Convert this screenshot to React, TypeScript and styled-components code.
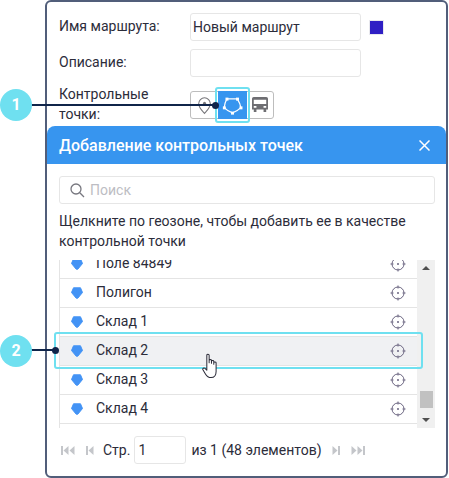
import styled, { createGlobalStyle } from "styled-components";

const GlobalStyle = createGlobalStyle`
  html, body {
    margin: 0;
    padding: 0;
    background: #fff;
  }
  body {
    font-family: Roboto, "Liberation Sans", sans-serif;
    font-size: 14px;
    color: #2c2c3a;
  }
`;

const rows = ["Поле 84849", "Полигон", "Склад 1", "Склад 2", "Склад 3", "Склад 4"];

const GeoIcon = () => (
  <svg width="12" height="12" viewBox="0 0 12 12">
    <path d="M2.500 .8H9.500L11.500 5.500L6.800 11.200H5.200L.5 5.500Z" fill="#4393f5" stroke="#4393f5" strokeLinejoin="round" />
  </svg>
);

const TargetIcon = () => (
  <svg width="16" height="16" viewBox="0 0 16 16" fill="none" stroke="#6a6480">
    <circle cx="8" cy="8" r="6" />
    <path d="M8 .5v3M8 12.500v3M.5 8h3M12.500 8h3" />
    <circle cx="8" cy="8" r="1" fill="#6a6480" stroke="none" />
  </svg>
);

const PinIcon = () => (
  <svg width="15" height="19" viewBox="0 0 16 20" fill="none" stroke="#77767a" strokeWidth="1.1">
    <path d="M8 18.500C5 15 1.800 12 1.800 8a6.200 6.200 0 0 1 12.400 0c0 4-3.200 7-6.200 10.500Z" />
    <circle cx="8" cy="7.500" r="1.600" fill="#77767a" stroke="none" />
  </svg>
);

const PolygonIcon = () => (
  <svg width="21" height="21" viewBox="0 0 24 24" fill="none" stroke="#fff" strokeWidth="1.4">
    <path d="M5.500 4.500H17.500Q21 10 21.500 14.500Q17 19 12 20.500Q7 19 2.500 14.500Q3 9 5.500 4.500Z" />
    <g fill="#fff" stroke="none">
      <rect x="4" y="3" width="3.400" height="3.400" />
      <rect x="16" y="3" width="3.400" height="3.400" />
      <rect x="20" y="13" width="3.400" height="3.400" />
      <rect x="10.300" y="19" width="3.400" height="3.400" />
      <rect x="1" y="13" width="3.400" height="3.400" />
    </g>
  </svg>
);

const BusIcon = () => (
  <svg width="18" height="16" viewBox="0 0 20 18">
    <path
      fillRule="evenodd"
      fill="#6e6e72"
      d="M3 0H17A2 2 0 0 1 19 2V14H17V17H14V14H6V17H3V14H1V2A2 2 0 0 1 3 0ZM3 3V8H17V3ZM3 10V12H6V10ZM14 10V12H17V10Z"
    />
  </svg>
);

const SearchIcon = () => (
  <svg width="15" height="15" viewBox="0 0 15 15" fill="none" stroke="#77777f" strokeWidth="1.3">
    <circle cx="6" cy="6" r="5" />
    <path d="M9.800 9.800L14 14" />
  </svg>
);

const CloseIcon = () => (
  <svg width="11" height="11" viewBox="0 0 11 11" stroke="#fff" strokeWidth="1.5">
    <path d="M.5.5l10 10M10.500.5l-10 10" />
  </svg>
);

const PagerIcon = ({ double, flip }: { double?: boolean; flip?: boolean }) => (
  <PagerGlyph $flip={flip} width={double ? 14 : 8} height="9" viewBox={double ? "0 0 14 9" : "0 0 8 9"} fill="#c4c6ca">
    <rect x="0" y="0" width="2" height="9" />
    <path d="M7.500 0V9L2.500 4.500Z" />
    {double && <path d="M13.500 0V9L8.500 4.500Z" />}
  </PagerGlyph>
);

const HandCursor = () => (
  <svg width="18" height="26" viewBox="0 0 19 28" fill="#fff" stroke="#2b2b38" strokeWidth="1.1" strokeLinejoin="round">
    <path d="M5 14V2.500C5 .8 7.500 .8 7.500 2.500V10.500V8C7.500 6.800 10 6.800 10 8V11V9C10 7.800 12.500 7.800 12.500 9V12V10.500C12.500 9.300 15 9.300 15 10.500V20C15 24 13 26.500 9.500 26.500C6.500 26.500 5 25 3.500 22.500L.8 18C.2 16.800 1.800 15.500 3 16.500L5 18.500Z" />
  </svg>
);

export default function App() {
  return (
    <>
      <GlobalStyle />
      <Page>
        <Card>
          <Form>
            <Label>Имя маршрута:</Label>
            <NameCell>
              <TextField>Новый маршрут</TextField>
              <Swatch />
            </NameCell>
            <Label>Описание:</Label>
            <TextField />
            <Label $multiline>Контрольные точки:</Label>
            <ButtonGroup>
              <ToolButton>
                <PinIcon />
              </ToolButton>
              <ToolButton $active>
                <PolygonIcon />
              </ToolButton>
              <ToolButton>
                <BusIcon />
              </ToolButton>
            </ButtonGroup>
          </Form>
          <Dialog>
            <DialogHeader>
              <DialogTitle>Добавление контрольных точек</DialogTitle>
              <CloseIcon />
            </DialogHeader>
            <DialogBody>
              <SearchField>
                <SearchIcon />
                <span>Поиск</span>
              </SearchField>
              <Hint>Щелкните по геозоне, чтобы добавить ее в качестве контрольной точки</Hint>
              <ListBox>
                <ListViewport>
                  <ListInner>
                    {rows.map((name) => (
                      <Row key={name} $hover={name === "Склад 2"}>
                        <GeoIcon />
                        <RowName>{name}</RowName>
                        <TargetIcon />
                      </Row>
                    ))}
                  </ListInner>
                </ListViewport>
                <ScrollBar>
                  <ArrowUp />
                  <ScrollThumb />
                  <ArrowDown />
                </ScrollBar>
              </ListBox>
              <Pager>
                <PagerIcon double />
                <PagerGap />
                <PagerIcon />
                <PageLabel>Стр.</PageLabel>
                <PageInput>1</PageInput>
                <PageTotal>из 1 (48 элементов)</PageTotal>
                <PagerIcon flip />
                <PagerGap />
                <PagerIcon double flip />
              </Pager>
            </DialogBody>
          </Dialog>
        </Card>

        <ToolRing />
        <RowRing />
        <Leader $top={104} $width={199} />
        <Leader $top={349} $width={39} />
        <Dot $left={212} $top={102} />
        <Dot $left={52} $top={347} />
        <Badge $top={89}>1</Badge>
        <Badge $top={335}>2</Badge>
        <CursorSpot>
          <HandCursor />
        </CursorSpot>
      </Page>
    </>
  );
}

const Page = styled.div`
  position: relative;
  width: 449px;
  height: 478px;
  overflow: hidden;
  padding-left: 45px;
  box-sizing: border-box;
`;

const Card = styled.div`
  width: 403px;
  height: 478px;
  box-sizing: border-box;
  border: 2px solid #515e7a;
  border-radius: 6px;
  display: flex;
  flex-direction: column;
  overflow: hidden;
`;

const Form = styled.div`
  display: grid;
  grid-template-columns: 131px 1fr;
  grid-auto-rows: 28px;
  row-gap: 8px;
  padding: 11px 12px 0;
  height: 124px;
  flex: none;
  box-sizing: border-box;
`;

const Label = styled.div<{ $multiline?: boolean }>`
  line-height: ${(p) => (p.$multiline ? "20px" : "27px")};
  width: 110px;
  margin-top: ${(p) => (p.$multiline ? "-1px" : "0")};
`;

const NameCell = styled.div`
  display: flex;
  align-items: center;
  gap: 9px;
`;

const TextField = styled.div`
  width: 171px;
  height: 28px;
  box-sizing: border-box;
  border: 1px solid #e6e6e6;
  border-radius: 3px;
  padding-left: 2px;
  line-height: 26px;
  background: #fff;
`;

const Swatch = styled.div`
  width: 13px;
  height: 13px;
  background: #2f1fc4;
  box-shadow: 0 0 0 1px #e8e8ee;
`;

const ButtonGroup = styled.div`
  display: flex;
  width: 84px;
  height: 28px;
  margin-top: 6px;
  box-sizing: border-box;
  border: 1px solid #bdbdbd;
  border-radius: 3px;
`;

const ToolButton = styled.div<{ $active?: boolean }>`
  flex: ${(p) => (p.$active ? "0 0 29px" : "1")};
  display: flex;
  align-items: center;
  justify-content: center;
  background: ${(p) => (p.$active ? "#3795ef" : "transparent")};
  margin: ${(p) => (p.$active ? "-1px 0" : "0")};
`;

const Dialog = styled.div`
  flex: 1;
  display: flex;
  flex-direction: column;
  border-radius: 8px 8px 0 0;
  min-height: 0;
`;

const DialogHeader = styled.div`
  height: 38px;
  flex: none;
  background: #3795ef;
  border-radius: 8px 8px 0 0;
  display: flex;
  align-items: center;
  justify-content: space-between;
  padding: 0 16px 0 12px;
`;

const DialogTitle = styled.div`
  font-size: 16px;
  font-weight: 500;
  color: #fff;
`;

const DialogBody = styled.div`
  padding: 12px 11px 0 12px;
`;

const SearchField = styled.div`
  height: 28px;
  box-sizing: border-box;
  border: 1px solid #e6e6e6;
  border-radius: 3px;
  display: flex;
  align-items: center;
  gap: 5px;
  padding-left: 10px;
  color: #bdbdc3;
`;

const Hint = styled.div`
  margin-top: 7px;
  line-height: 20px;
`;

const ListBox = styled.div`
  display: flex;
  height: 168px;
  margin-top: 9px;
`;

const ListViewport = styled.div`
  flex: 1;
  overflow: hidden;
  border-left: 1px solid #e4e4e4;
`;

const ListInner = styled.div`
  margin-top: -10px;
`;

const Row = styled.div<{ $hover?: boolean }>`
  height: 28px;
  border-bottom: 1px solid #e4e4e4;
  display: flex;
  align-items: center;
  padding: 0 11px;
  background: ${(p) => (p.$hover ? "#f0f1f3" : "#fff")};
`;

const RowName = styled.div`
  flex: 1;
  padding-left: 13px;
  margin-bottom: 2px;
`;

const ScrollBar = styled.div`
  position: relative;
  flex: 0 0 18px;
  background: #f0f0f0;
`;

const ArrowUp = styled.div`
  position: absolute;
  left: 5px;
  top: 6px;
  border: 4px solid transparent;
  border-top: 0;
  border-bottom: 4px solid #505050;
`;

const ArrowDown = styled.div`
  position: absolute;
  left: 5px;
  bottom: 6px;
  border: 4px solid transparent;
  border-bottom: 0;
  border-top: 4px solid #505050;
`;

const ScrollThumb = styled.div`
  position: absolute;
  left: 3px;
  top: 131px;
  width: 13px;
  height: 17px;
  background: #c1c1c1;
`;

const Pager = styled.div`
  display: flex;
  align-items: center;
  margin-top: 8px;
  height: 28px;
  padding-left: 2px;
`;

const PagerGlyph = styled.svg<{ $flip?: boolean }>`
  transform: ${(p) => (p.$flip ? "scaleX(-1)" : "none")};
`;

const PagerGap = styled.div`
  width: 11px;
`;

const PageLabel = styled.div`
  padding: 0 4px 0 9px;
`;

const PageTotal = styled.div`
  padding: 0 10px 0 5px;
`;

const PageInput = styled.div`
  width: 52px;
  height: 28px;
  box-sizing: border-box;
  border: 1px solid #e6e6e6;
  border-radius: 3px;
  padding-left: 3px;
  line-height: 26px;
`;

const ToolRing = styled.div`
  position: absolute;
  left: 215px;
  top: 87px;
  width: 35px;
  height: 36px;
  box-sizing: border-box;
  border: 2px solid #6fe0f0;
  border-radius: 3px;
`;

const RowRing = styled.div`
  position: absolute;
  left: 54px;
  top: 332px;
  width: 369px;
  height: 37px;
  box-sizing: border-box;
  border: 2px solid #6fe0f0;
  border-radius: 3px;
`;

const Leader = styled.div<{ $top: number; $width: number }>`
  position: absolute;
  left: 16px;
  top: ${(p) => p.$top}px;
  width: ${(p) => p.$width}px;
  height: 2px;
  background: #10254a;
`;

const Dot = styled.div<{ $left: number; $top: number }>`
  position: absolute;
  left: ${(p) => p.$left}px;
  top: ${(p) => p.$top}px;
  width: 7px;
  height: 7px;
  border-radius: 50%;
  background: #10254a;
`;

const Badge = styled.div<{ $top: number }>`
  position: absolute;
  left: 0;
  top: ${(p) => p.$top}px;
  width: 32px;
  height: 32px;
  border-radius: 50%;
  background: #6fe0f0;
  color: #fff;
  font-weight: 700;
  font-size: 16px;
  text-align: center;
  line-height: 32px;
`;

const CursorSpot = styled.div`
  position: absolute;
  left: 202px;
  top: 353px;
  line-height: 0;
`;
